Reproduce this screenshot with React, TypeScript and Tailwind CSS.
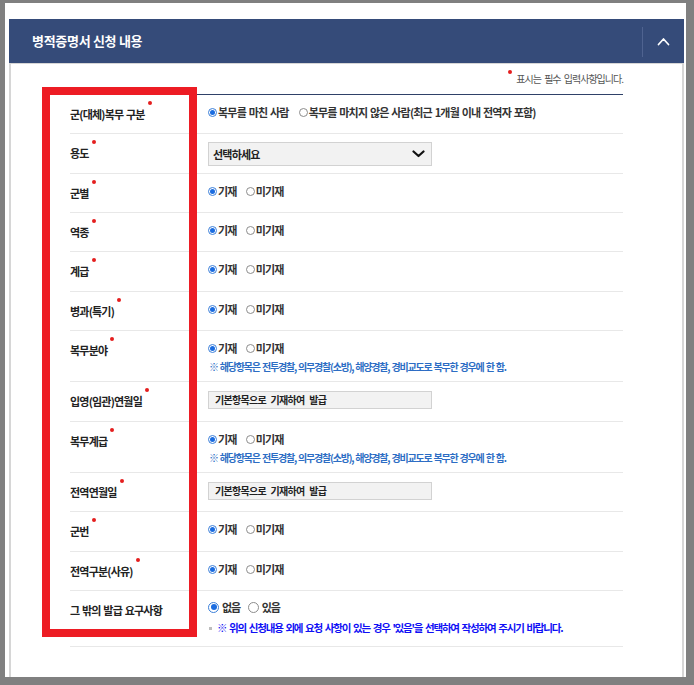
import React from 'react';

type Kind = 'service' | 'select' | 'yn' | 'input' | 'extra';

const rows: { label: string; req: boolean; h: string; kind: Kind; note?: boolean }[] = [
  { label: '군(대체)복무 구분', req: true, h: 'h-[39px]', kind: 'service' },
  { label: '용도', req: true, h: 'h-[40px]', kind: 'select' },
  { label: '군별', req: true, h: 'h-[39px]', kind: 'yn' },
  { label: '역종', req: true, h: 'h-[39px]', kind: 'yn' },
  { label: '계급', req: true, h: 'h-[40px]', kind: 'yn' },
  { label: '병과(특기)', req: true, h: 'h-[39px]', kind: 'yn' },
  { label: '복무분야', req: true, h: 'h-[51px]', kind: 'yn', note: true },
  { label: '입영(임관)연월일', req: true, h: 'h-[40px]', kind: 'input' },
  { label: '복무계급', req: true, h: 'h-[51px]', kind: 'yn', note: true },
  { label: '전역연월일', req: true, h: 'h-[39px]', kind: 'input' },
  { label: '군번', req: true, h: 'h-[40px]', kind: 'yn' },
  { label: '전역구분(사유)', req: true, h: 'h-[39px]', kind: 'yn' },
  { label: '그 밖의 발급 요구사항', req: false, h: 'h-[56px]', kind: 'extra' },
];

function Radio({ checked, big }: { checked?: boolean; big?: boolean }) {
  return (
    <span
      className={`inline-flex shrink-0 items-center justify-center rounded-full border bg-white ${
        big ? 'w-[11px] h-[11px]' : 'w-[9px] h-[9px]'
      } ${checked ? 'border-[#3b7fd9]' : 'border-[#8c8c8c]'}`}
    >
      {checked && <span className={`rounded-full bg-[#1b6ce0] ${big ? 'w-[6px] h-[6px]' : 'w-[5px] h-[5px]'}`} />}
    </span>
  );
}

function YesNo() {
  return (
    <div className="flex items-center h-[14px] text-[11px] font-bold text-[#333] tracking-[-0.8px]">
      <span className="flex items-center gap-[1px]">
        <Radio checked />
        기재
      </span>
      <span className="flex items-center gap-[1px] ml-[9px]">
        <Radio />
        미기재
      </span>
    </div>
  );
}

function Value({ kind, note }: { kind: Kind; note?: boolean }) {
  if (kind === 'service') {
    return (
      <div className="pt-[10px]">
        <div className="flex items-center h-[14px] text-[11px] font-bold text-[#333] tracking-[-0.8px] [word-spacing:1px]">
          <span className="flex items-center gap-[1px]">
            <Radio checked />
            복무를 마친 사람
          </span>
          <span className="flex items-center gap-[1px] ml-[10px]">
            <Radio />
            복무를 마치지 않은 사람(최근 1개월 이내 전역자 포함)
          </span>
        </div>
      </div>
    );
  }
  if (kind === 'select') {
    return (
      <div className="pt-[8px]">
        <div className="w-[224px] h-[24px] bg-[#f2f2f2] border border-[#d2d2d2] flex items-center justify-between pl-[4px] pr-[6px]">
          <span className="text-[11px] font-bold text-[#222] tracking-[-0.8px] leading-[14px]">선택하세요</span>
          <svg width="13" height="8" viewBox="0 0 13 8" fill="none">
            <polyline points="1.5,1.5 6.5,6 11.5,1.5" stroke="#111" strokeWidth="2.2" strokeLinecap="round" strokeLinejoin="round" />
          </svg>
        </div>
      </div>
    );
  }
  if (kind === 'input') {
    return (
      <div className="pt-[9px]">
        <div className="w-[224px] h-[18px] bg-[#f2f2f2] border border-[#d2d2d2] flex items-center pl-[6px]">
          <span className="text-[10px] font-bold text-[#222] tracking-[-0.7px] [word-spacing:3px] leading-[14px]">
            기본항목으로 기재하여 발급
          </span>
        </div>
      </div>
    );
  }
  if (kind === 'extra') {
    return (
      <div className="pt-[9px]">
        <div className="flex items-center h-[14px] text-[11px] font-bold text-[#333] tracking-[-1.2px]">
          <span className="flex items-center gap-[3px]">
            <Radio checked big />
            없음
          </span>
          <span className="flex items-center gap-[3px] ml-[8px]">
            <Radio big />
            있음
          </span>
        </div>
        <div className="mt-[7px] flex items-center h-[14px]">
          <span className="w-[3px] h-[3px] bg-[#bdbdbd] ml-[1px] mr-[5px]" />
          <span className="text-[10.5px] font-bold text-[#1010f5] tracking-[-1.2px] [word-spacing:1.6px] leading-[14px]">
            ※ 위의 신청내용 외에 요청 사항이 있는 경우 '있음'을 선택하여 작성하여 주시기 바랍니다.
          </span>
        </div>
      </div>
    );
  }
  return (
    <div className="pt-[10px]">
      <YesNo />
      {note && (
        <div className="mt-[5px] h-[14px] text-[10px] font-bold text-[#2c6dc4] tracking-[-1.2px] [word-spacing:1px] leading-[14px] pl-[1px]">
          ※ 해당항목은 전투경찰, 의무경찰(소방), 해양경찰, 경비교도로 복무한 경우에 한 함.
        </div>
      )}
    </div>
  );
}

export default function App() {
  return (
    <div
      className="relative w-[694px] h-[685px] bg-[#808080] pl-[5px] pt-[3px] pr-[8px] pb-[8px] overflow-hidden"
      style={{ fontFamily: '"Noto Sans CJK KR", "Noto Sans", sans-serif' }}
    >
      <div className="h-full bg-white pt-[16px] pl-[4px] pr-[2px] flex flex-col">
        <div className="h-[44px] bg-[#354b79] flex items-center shrink-0">
          <h2 className="pl-[23px] flex-1 text-[13px] font-bold text-white leading-[16px] tracking-[-0.3px]">병적증명서 신청 내용</h2>
          <div className="w-px h-[30px] bg-[#4f6390] mt-[2px]" />
          <div className="w-[41px] h-full flex items-center justify-center">
            <svg width="13" height="9" viewBox="0 0 13 9" fill="none">
              <polyline points="1.5,7.5 6.5,2 11.5,7.5" stroke="#fff" strokeWidth="1.7" strokeLinecap="round" strokeLinejoin="round" />
            </svg>
          </div>
        </div>

        <div className="flex-1 border-x-2 border-t border-[#d6d6d6] px-[59px]">
          <div className="h-[30px] flex items-center justify-end">
            <span className="relative text-[10px] text-[#555] tracking-[-1px] [word-spacing:2px] leading-[14px]">
              <span className="absolute -left-[8px] -top-[2px] w-[4px] h-[4px] rounded-full bg-[#e41e1e]" />
              표시는 필수 입력사항입니다.
            </span>
          </div>

          <div className="border-t border-[#2f4168]">
            {rows.map((r) => (
              <div key={r.label} className={`${r.h} flex border-b border-[#e8e8e8]`}>
                <div className="w-[138px] shrink-0 pt-[12px] flex items-start">
                  <span className="relative text-[11px] font-bold text-[#222] tracking-[-0.8px] [word-spacing:1px] leading-[14px]">
                    {r.label}
                    {r.req && (
                      <span className="absolute left-[calc(100%+3px)] -top-[6px] w-[4px] h-[4px] rounded-full bg-[#e41e1e]" />
                    )}
                  </span>
                </div>
                <div className="flex-1">
                  <Value kind={r.kind} note={r.note} />
                </div>
              </div>
            ))}
          </div>
        </div>
      </div>

      <div className="absolute left-[42px] top-[87px] w-[155px] h-[550px] border-[8px] border-[#ed1c24]" />
    </div>
  );
}
